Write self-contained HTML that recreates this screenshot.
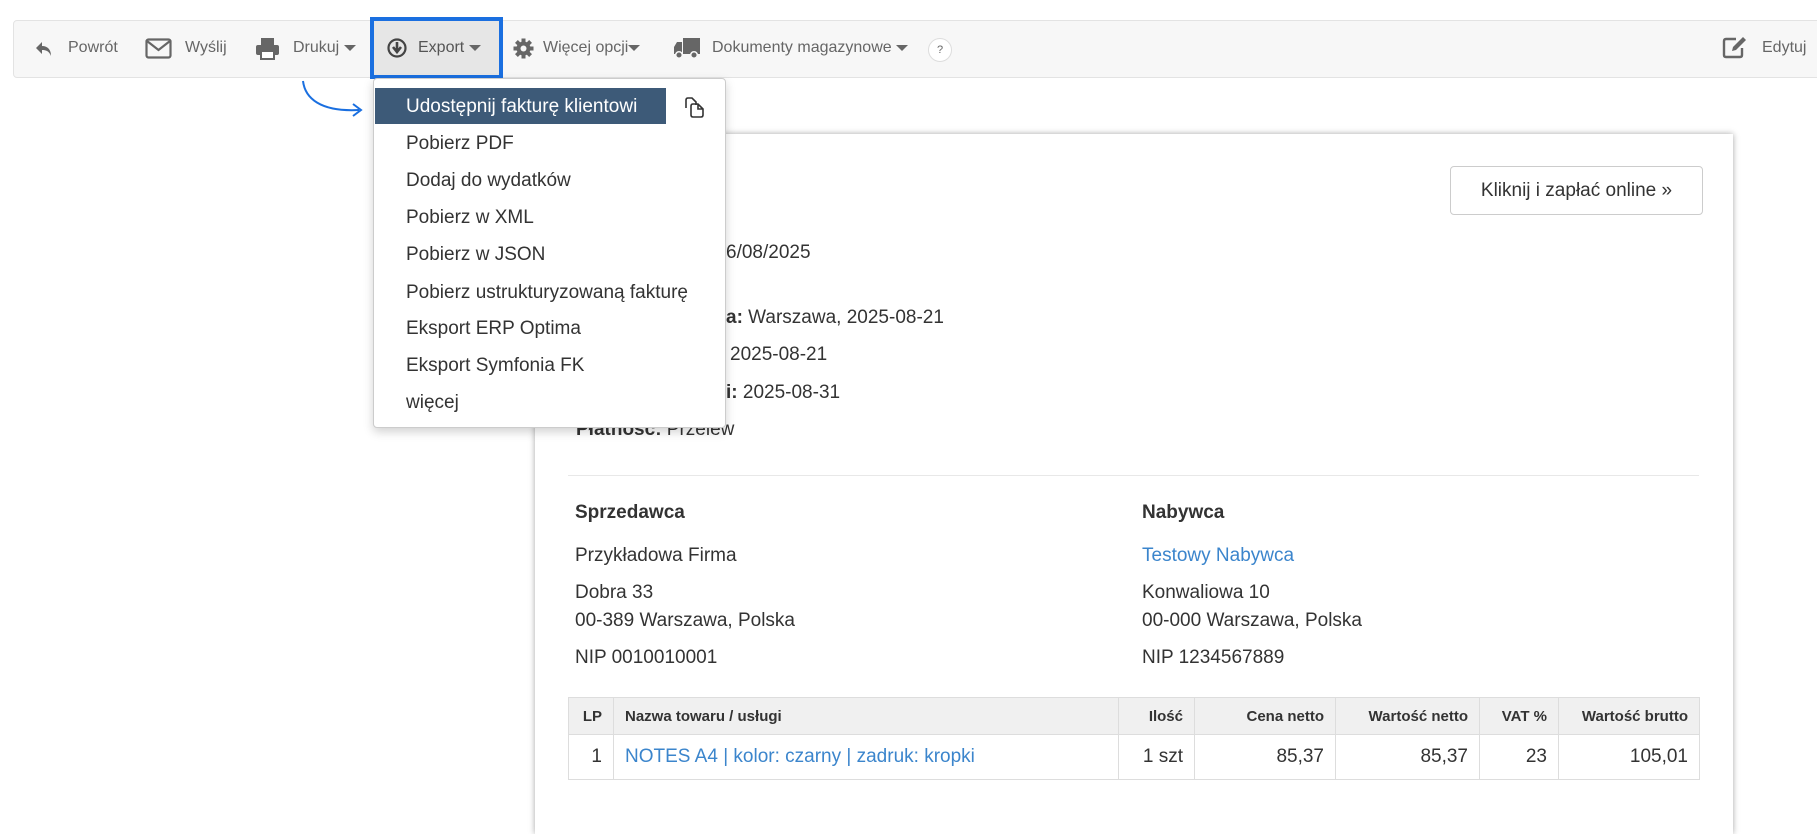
<!DOCTYPE html>
<html><head><meta charset="utf-8">
<style>
*{margin:0;padding:0;box-sizing:border-box}
body{width:1817px;height:781px;overflow:hidden;background:#fff;font-family:"Liberation Sans",Arial,sans-serif;color:#333;position:relative}
.a{position:absolute;white-space:nowrap}
.tb{position:absolute;left:13px;top:20px;width:1830px;height:58px;background:#f7f7f7;border:1px solid #e3e3e3;border-radius:4px}
.t{position:absolute;top:38px;font-size:16px;color:#666;line-height:20px;white-space:nowrap}
.car{display:inline-block;width:0;height:0;border-left:6px solid transparent;border-right:6px solid transparent;border-top:6px solid #666;vertical-align:middle}
.card{position:absolute;left:535px;top:134px;width:1198px;height:700px;background:#fff;box-shadow:0 0 6px rgba(0,0,0,.35)}
.dd{position:absolute;left:373px;top:78px;width:353px;height:350px;background:#fff;border:1px solid #ccc;border-radius:4px;box-shadow:0 4px 10px rgba(0,0,0,.18)}
.it{position:absolute;left:32px;font-size:19px;color:#333;line-height:24px;white-space:nowrap}
.f19{font-size:19px;line-height:24px}
table{position:absolute;left:568px;top:697px;border-collapse:collapse;font-size:15px;table-layout:fixed}
td,th{border:1px solid #ddd;padding:0 11px;text-align:right;white-space:nowrap}
th{background:#f0f0f0;height:37px;font-weight:bold;color:#333}
td{height:45px;font-size:19px}
.lk{color:#3b85cc}
</style></head><body>
<div class="tb"></div>
<svg class="a" style="left:35px;top:40px" width="18" height="18" viewBox="0 0 18 18"><path d="M7 2 L1 8 L7 14 V10 C11 10 14 11 16 16 C16 10 13 6 7 6 Z" fill="#666"/></svg>
<div class="t" style="left:68px">Powrót</div>
<svg class="a" style="left:145px;top:38px" width="27" height="21" viewBox="0 0 27 21"><rect x="1.5" y="1.5" width="24" height="18" rx="2" fill="none" stroke="#666" stroke-width="2.2"/><path d="M2 3 L13.5 12 L25 3" fill="none" stroke="#666" stroke-width="2.2"/></svg>
<div class="t" style="left:185px">Wyślij</div>
<svg class="a" style="left:255px;top:37px" width="25" height="23" viewBox="0 0 25 23"><rect x="6" y="1" width="13" height="7" fill="#666"/><rect x="1" y="8" width="23" height="10" rx="2" fill="#666"/><rect x="6" y="14" width="13" height="8" fill="#fff" stroke="#666" stroke-width="2"/></svg>
<div class="t" style="left:293px">Drukuj <span class="car"></span></div>
<div class="a" style="left:370px;top:17px;width:133px;height:62px;background:#e6e6e6;border:4px solid #1a6fe0"></div>
<svg class="a" style="left:387px;top:38px" width="20" height="20" viewBox="0 0 20 20"><circle cx="10" cy="10" r="8.5" fill="none" stroke="#444" stroke-width="2.2"/><path d="M10 4 V12 M6 9 L10 14 L14 9" fill="none" stroke="#444" stroke-width="2.6"/></svg>
<div class="t" style="left:418px;color:#555">Export <span class="car"></span></div>
<svg class="a" style="left:513px;top:38px" width="21" height="21" viewBox="0 0 21 21"><g fill="#666"><circle cx="10.5" cy="10.5" r="7"/><rect x="8.5" y="0.5" width="4" height="20"/><rect x="0.5" y="8.5" width="20" height="4"/><rect x="8.5" y="0.5" width="4" height="20" transform="rotate(45 10.5 10.5)"/><rect x="8.5" y="0.5" width="4" height="20" transform="rotate(-45 10.5 10.5)"/></g><circle cx="10.5" cy="10.5" r="3" fill="#f7f7f7"/></svg>
<div class="t" style="left:543px">Więcej opcji<span class="car"></span></div>
<svg class="a" style="left:673px;top:37px" width="28" height="23" viewBox="0 0 28 23"><path d="M10 1 H27 V17 H10 Z M1 10 L4 5 H9 V17 H1 Z" fill="#666"/><circle cx="6" cy="18" r="3.3" fill="#666" stroke="#f7f7f7" stroke-width="1.5"/><circle cx="21" cy="18" r="3.3" fill="#666" stroke="#f7f7f7" stroke-width="1.5"/></svg>
<div class="t" style="left:712px">Dokumenty magazynowe <span class="car"></span></div>
<div class="a" style="left:928px;top:38px;width:24px;height:24px;border-radius:50%;background:#fff;border:1px solid #ddd;font-size:11px;color:#666;text-align:center;line-height:22px">?</div>
<svg class="a" style="left:1722px;top:35px" width="26" height="24" viewBox="0 0 26 24"><path d="M14 4 H4 Q2 4 2 6 V20 Q2 22 4 22 H18 Q20 22 20 20 V13" fill="none" stroke="#666" stroke-width="2.4"/><path d="M10 16 L11 12 L21 2 L24 5 L14 15 Z" fill="#666"/></svg>
<div class="t" style="left:1762px">Edytuj</div>

<div class="card"></div>
<div class="a" style="left:1450px;top:166px;width:253px;height:49px;border:1px solid #ccc;border-radius:4px;font-size:19px;line-height:47px;text-align:center;color:#333">Kliknij i zapłać online »</div>
<div class="a f19" style="left:726px;top:241px">6/08/2025</div>
<div class="a f19" style="left:726px;top:306px"><b>a:</b> Warszawa, 2025-08-21</div>
<div class="a f19" style="left:730px;top:343px">2025-08-21</div>
<div class="a f19" style="left:726px;top:381px"><b>i:</b> 2025-08-31</div>
<div class="a f19" style="left:576px;top:418px"><b>Płatność:</b> Przelew</div>
<div class="a" style="left:568px;top:475px;width:1131px;height:1px;background:#e8e8e8"></div>
<div class="a f19" style="left:575px;top:501px;font-weight:bold">Sprzedawca</div>
<div class="a f19" style="left:575px;top:544px">Przykładowa Firma</div>
<div class="a f19" style="left:575px;top:581px">Dobra 33</div>
<div class="a f19" style="left:575px;top:609px">00-389 Warszawa, Polska</div>
<div class="a f19" style="left:575px;top:646px">NIP 0010010001</div>
<div class="a f19" style="left:1142px;top:501px;font-weight:bold">Nabywca</div>
<div class="a f19 lk" style="left:1142px;top:544px">Testowy Nabywca</div>
<div class="a f19" style="left:1142px;top:581px">Konwaliowa 10</div>
<div class="a f19" style="left:1142px;top:609px">00-000 Warszawa, Polska</div>
<div class="a f19" style="left:1142px;top:646px">NIP 1234567889</div>
<table>
<colgroup><col style="width:45px"><col style="width:505px"><col style="width:76px"><col style="width:141px"><col style="width:144px"><col style="width:79px"><col style="width:141px"></colgroup>
<tr><th>LP</th><th style="text-align:left">Nazwa towaru / usługi</th><th>Ilość</th><th>Cena netto</th><th>Wartość netto</th><th>VAT %</th><th>Wartość brutto</th></tr>
<tr><td>1</td><td style="text-align:left" class="lk">NOTES A4 | kolor: czarny | zadruk: kropki</td><td>1 szt</td><td>85,37</td><td>85,37</td><td>23</td><td>105,01</td></tr>
</table>

<svg class="a" style="left:295px;top:78px" width="75" height="40" viewBox="0 0 75 40"><path d="M8 3 C10 20 25 34 64 32" fill="none" stroke="#1a6fe0" stroke-width="2"/><path d="M58 26 L66 32 L58 38" fill="none" stroke="#1a6fe0" stroke-width="2"/></svg>

<div class="dd">
<div class="a" style="left:1px;top:9px;width:291px;height:36px;background:#3d5a78"></div>
<div class="it" style="top:16px;color:#fff">Udostępnij fakturę klientowi</div>
<svg class="a" style="left:309px;top:17px" width="22" height="22" viewBox="0 0 22 22"><path d="M3 12 V4 Q3 2 5 2 H9 L13 6 V9" fill="none" stroke="#333" stroke-width="1.6"/><path d="M8 10 Q8 8 10 8 H15 L20 13 V19 Q20 21 18 21 H10 Q8 21 8 19 Z M15 8 V13 H20" fill="none" stroke="#333" stroke-width="1.6"/></svg>
<div class="it" style="top:53px">Pobierz PDF</div>
<div class="it" style="top:90px">Dodaj do wydatków</div>
<div class="it" style="top:127px">Pobierz w XML</div>
<div class="it" style="top:164px">Pobierz w JSON</div>
<div class="it" style="top:202px">Pobierz ustrukturyzowaną fakturę</div>
<div class="it" style="top:238px">Eksport ERP Optima</div>
<div class="it" style="top:275px">Eksport Symfonia FK</div>
<div class="it" style="top:312px">więcej</div>
</div>
</body></html>
